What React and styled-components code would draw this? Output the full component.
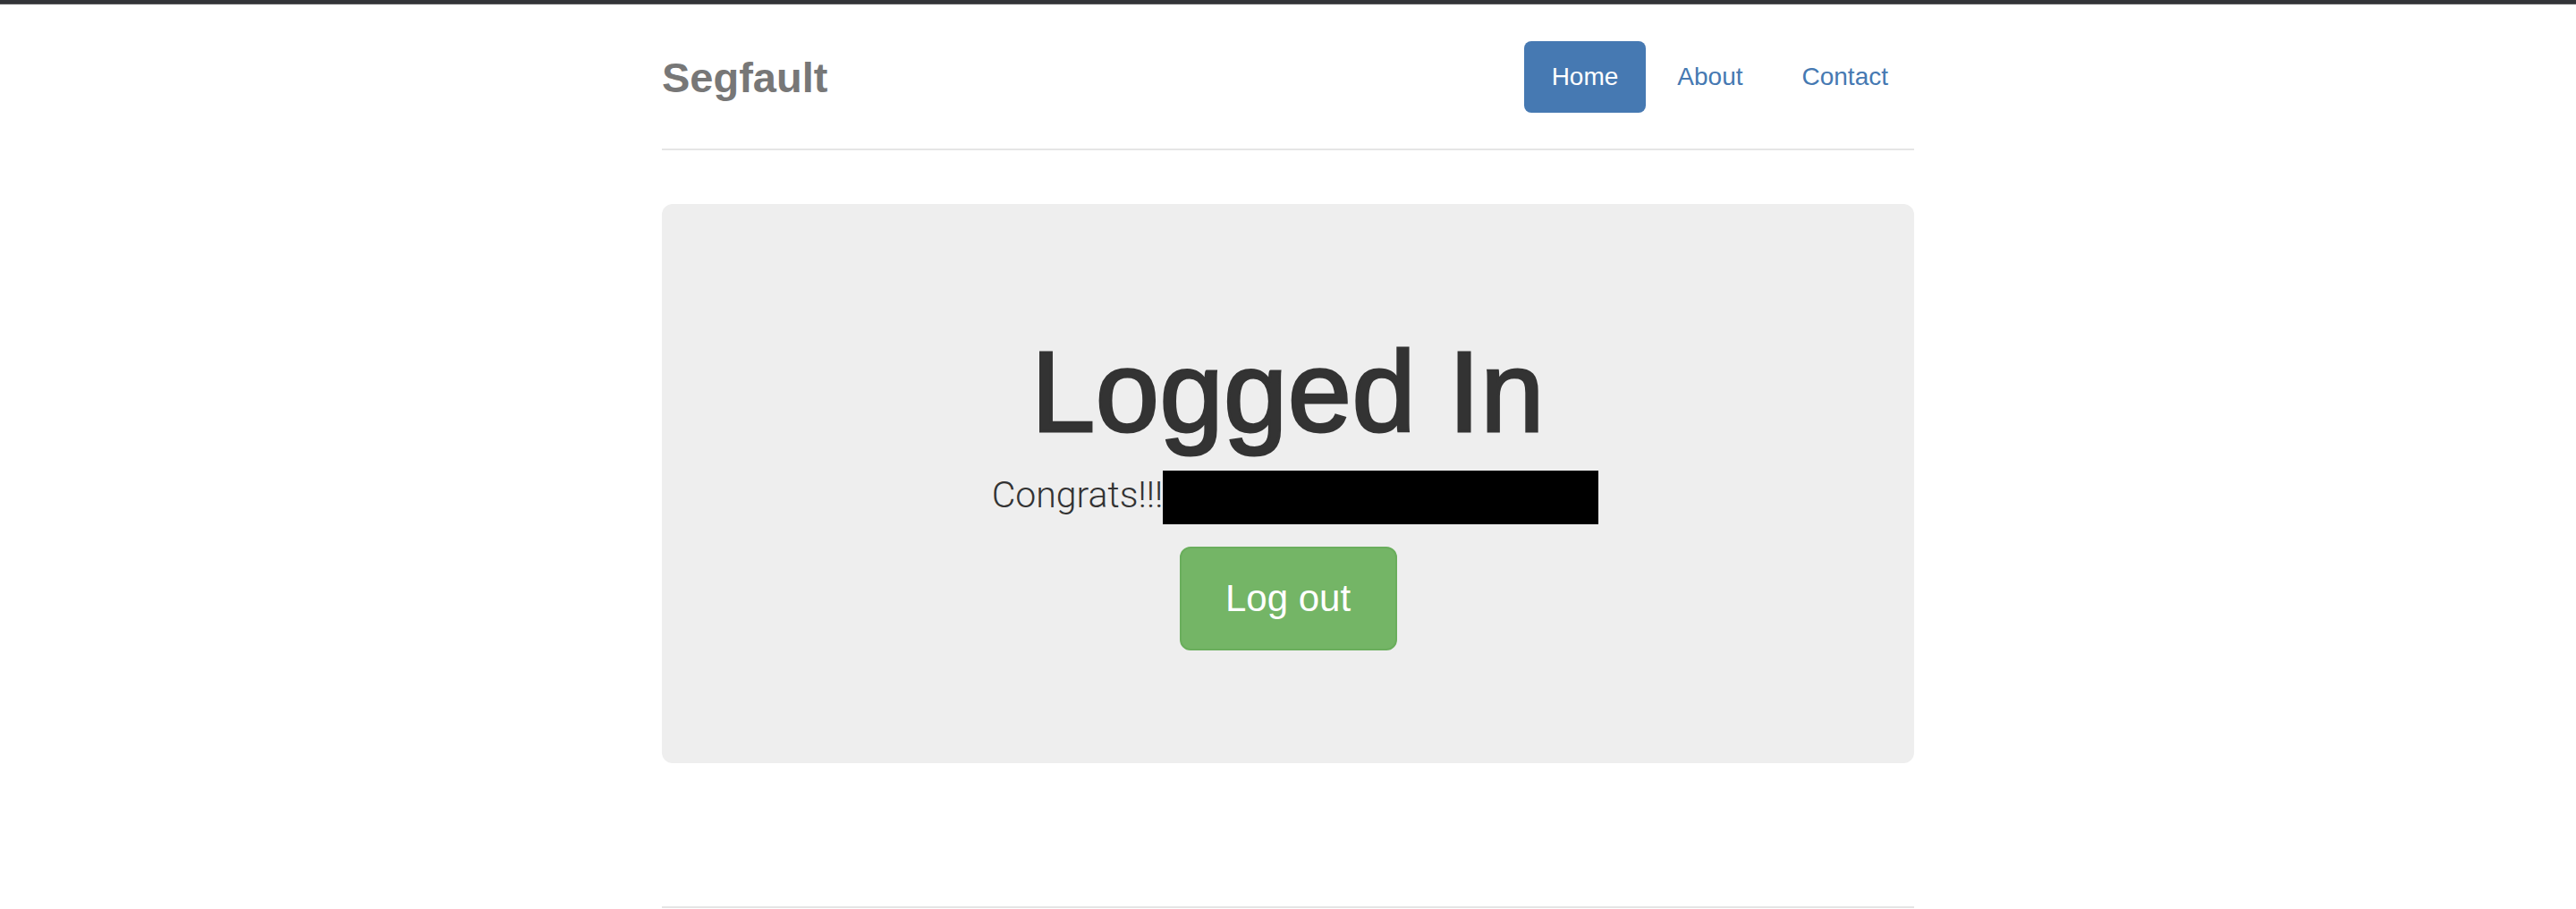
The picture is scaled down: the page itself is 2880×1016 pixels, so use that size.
import styled, { createGlobalStyle } from "styled-components";

/* Global ---------------------------*/
const GlobalStyle = createGlobalStyle`
    html,
    body {
        margin: 0;
        padding: 0;
        background-color: #fff;
        font-family: "Liberation Sans", Arial, sans-serif;
        color: #333;
    }
`;

const App = () => {
    return (
        <>
            <GlobalStyle />
            <TopBar />
            <Container>
                {/* Header */}
                <Header>
                    <Brand>Segfault</Brand>
                    <Nav>
                        <Pill active>Home</Pill>
                        <Pill>About</Pill>
                        <Pill>Contact</Pill>
                    </Nav>
                </Header>

                {/* Jumbotron */}
                <Jumbotron>
                    <Title>Logged In</Title>
                    <Message>
                        <span>Congrats!!!</span>
                        <Redacted />
                    </Message>
                    <ButtonRow>
                        <LogoutButton type="button">Log out</LogoutButton>
                    </ButtonRow>
                </Jumbotron>

                <Footer />
            </Container>
        </>
    );
};

export default App;

const TopBar = styled.div`
    height: 4px;
    background-color: #333438;
    border-bottom: 1px solid #58585a;
`;

const Container = styled.div`
    width: 1400px;
    margin: 0 auto;
`;

const Header = styled.header`
    display: flex;
    justify-content: space-between;
    align-items: flex-start;
    padding-top: 41px;
    padding-bottom: 40px;
    border-bottom: 2px solid #e5e5e5;
    margin-bottom: 60px;
`;

const Brand = styled.h3`
    margin: 0;
    padding-top: 2px;
    font-size: 47px;
    line-height: 78px;
    font-weight: 700;
    color: #777;
`;

const Nav = styled.nav`
    display: flex;
    gap: 4px;
    margin-right: -2px;
`;

const Pill = styled.a`
    display: block;
    padding: 20px 31px;
    font-size: 28px;
    line-height: 40px;
    border-radius: 8px;
    text-decoration: none;
    cursor: pointer;
    color: ${(props) => (props.active ? "#fff" : "#4679b2")};
    background-color: ${(props) => (props.active ? "#4679b2" : "transparent")};
`;

const Jumbotron = styled.section`
    display: flex;
    flex-direction: column;
    align-items: center;
    padding: 96px 0 97px;
    background-color: #eee;
    border-radius: 12px;
    text-align: center;
`;

const Title = styled.h1`
    margin: 44px 0 18px;
    font-size: 128px;
    line-height: 140px;
    font-weight: 400;
    letter-spacing: 0.5px;
    color: #333;
    -webkit-text-stroke: 3px #333;
`;

const Message = styled.p`
    display: flex;
    align-items: flex-start;
    margin: 0 0 25px 16px;
    font-family: Roboto, "Liberation Sans", sans-serif;
    font-weight: 300;
    font-size: 41px;
    line-height: 55px;
    color: #333;
`;

const Redacted = styled.span`
    display: block;
    width: 487px;
    height: 60px;
    background-color: #000;
`;

const ButtonRow = styled.p`
    margin: 0 0 29px;
`;

const LogoutButton = styled.button`
    display: block;
    width: 243px;
    height: 116px;
    padding: 0;
    font-family: "Liberation Sans", Arial, sans-serif;
    font-size: 42px;
    line-height: 112px;
    color: #fff;
    background-color: #74b566;
    border: 2px solid #6aae5c;
    border-radius: 12px;
    cursor: pointer;
`;

const Footer = styled.footer`
    margin-top: 160px;
    border-top: 2px solid #e5e5e5;
    height: 40px;
`;
